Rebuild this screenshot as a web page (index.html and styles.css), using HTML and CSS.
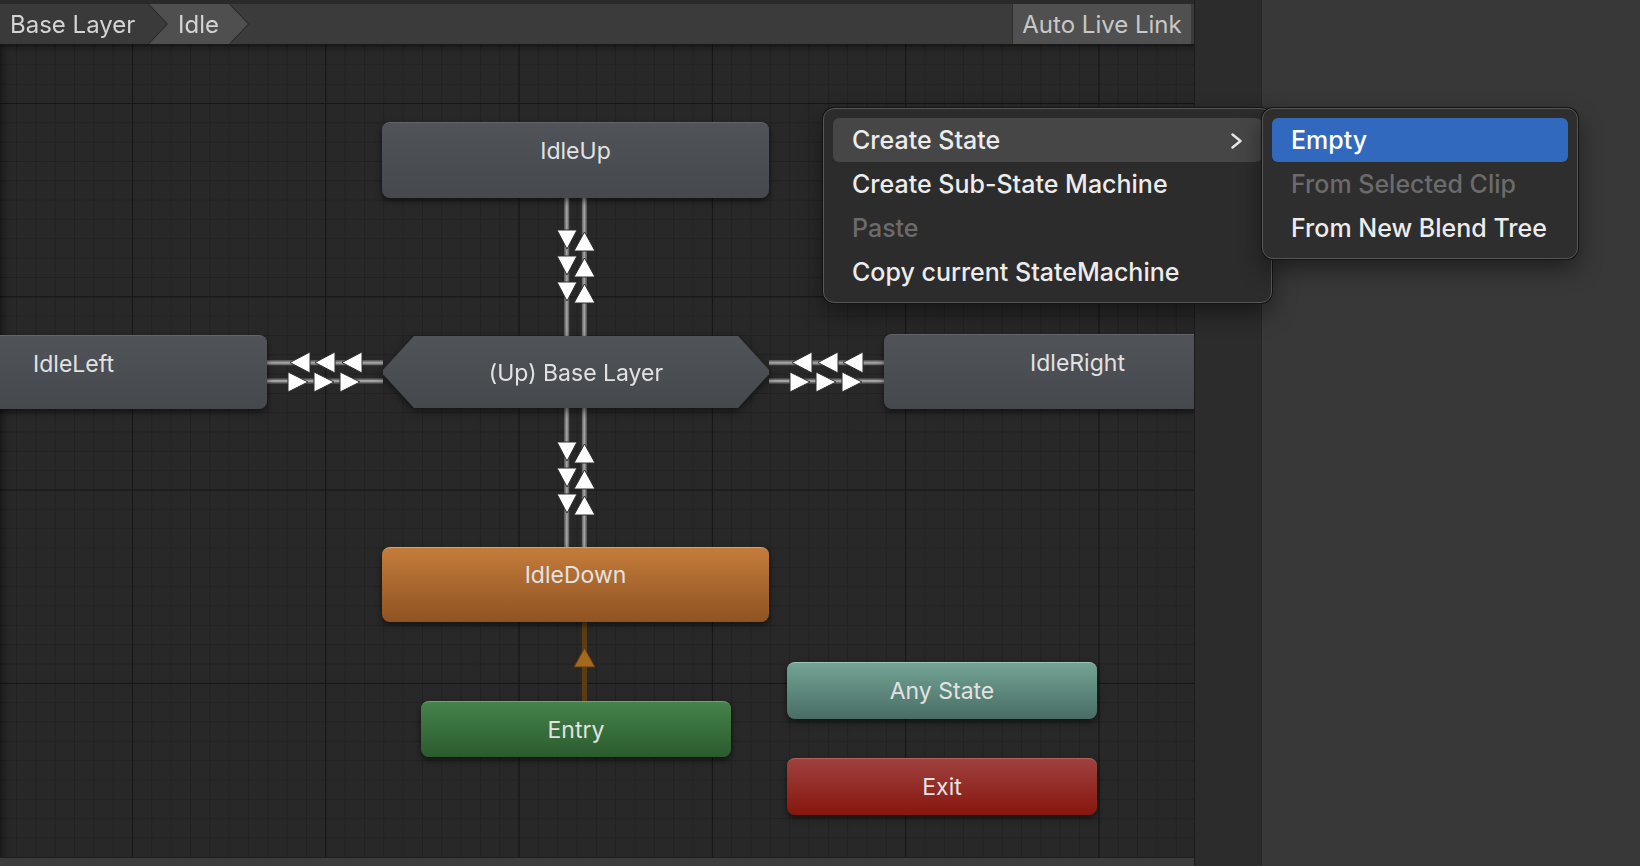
FILE: index.html
```html
<!DOCTYPE html>
<html>
<head>
<meta charset="utf-8">
<link rel="stylesheet" href="styles.css">
</head>
<body>
<div class="app">
  <div class="editor">
    <div class="header">
      <div class="toolbar">
        <div class="crumb-wrap crumb-wrap-base"><div class="crumb crumb-base">Base Layer</div></div>
        <div class="crumb-wrap crumb-wrap-idle"><div class="crumb crumb-idle">Idle</div></div>
        <div class="live-link">Auto Live Link</div>
      </div>
    </div>
    <div class="canvas">
      <svg class="wires" width="1194" height="813" viewBox="0 0 1194 813">
        <g class="wire">
          <line x1="566.7" y1="154" x2="566.7" y2="292"/>
          <line x1="584.3" y1="154" x2="584.3" y2="292"/>
          <line x1="566.7" y1="364" x2="566.7" y2="503"/>
          <line x1="584.3" y1="364" x2="584.3" y2="503"/>
          <line x1="267" y1="318.7" x2="383" y2="318.7"/>
          <line x1="267" y1="337" x2="383" y2="337"/>
          <line x1="769" y1="318.7" x2="884" y2="318.7"/>
          <line x1="769" y1="337" x2="884" y2="337"/>
        </g>
        <g class="wire-core">
          <line x1="566.7" y1="154" x2="566.7" y2="292"/>
          <line x1="584.3" y1="154" x2="584.3" y2="292"/>
          <line x1="566.7" y1="364" x2="566.7" y2="503"/>
          <line x1="584.3" y1="364" x2="584.3" y2="503"/>
          <line x1="267" y1="318.7" x2="383" y2="318.7"/>
          <line x1="267" y1="337" x2="383" y2="337"/>
          <line x1="769" y1="318.7" x2="884" y2="318.7"/>
          <line x1="769" y1="337" x2="884" y2="337"/>
        </g>
        <g class="arrow">
          <polygon points="557,186 577,186 567,205"/>
          <polygon points="557,212 577,212 567,231"/>
          <polygon points="557,238 577,238 567,257"/>
          <polygon points="574,207 595,207 584.5,188"/>
          <polygon points="574,233 595,233 584.5,214"/>
          <polygon points="574,259 595,259 584.5,240"/>

          <polygon points="557,398 577,398 567,417"/>
          <polygon points="557,424 577,424 567,443"/>
          <polygon points="557,450 577,450 567,469"/>
          <polygon points="574,419 595,419 584.5,400"/>
          <polygon points="574,445 595,445 584.5,426"/>
          <polygon points="574,471 595,471 584.5,452"/>

          <polygon points="290,318.5 310,308 310,329"/>
          <polygon points="315,318.5 335,308 335,329"/>
          <polygon points="342,318.5 362,308 362,329"/>
          <polygon points="288,328 288,348 308,338"/>
          <polygon points="314,328 314,348 334,338"/>
          <polygon points="340,328 340,348 360,338"/>

          <polygon points="792,318.5 812,308 812,329"/>
          <polygon points="818,318.5 838,308 838,329"/>
          <polygon points="843,318.5 863,308 863,329"/>
          <polygon points="790,328 790,348 810,338"/>
          <polygon points="816,328 816,348 836,338"/>
          <polygon points="842,328 842,348 862,338"/>
        </g>
        <line class="wire-entry" x1="584.5" y1="578" x2="584.5" y2="657"/>
        <polygon class="arrow-entry" points="574,623 595,623 584.5,604"/>
      </svg>

      <div class="node node-gray node-up">IdleUp</div>
      <div class="node node-gray node-left">IdleLeft</div>
      <div class="node node-gray node-right">IdleRight</div>
      <div class="hex-wrap"><div class="hex">(Up) Base Layer</div></div>
      <div class="node node-orange node-down">IdleDown</div>
      <div class="node node-small node-entry">Entry</div>
      <div class="node node-small node-any">Any State</div>
      <div class="node node-small node-exit">Exit</div>
    </div>
    <div class="bottombar"></div>
  </div>
  <div class="gutter"></div>
  <div class="panel"></div>

  <div class="menu menu-main">
    <div class="item item-active">
      <span>Create State</span>
      <svg class="chev" width="13" height="16" viewBox="0 0 13 16"><polyline points="2.5,1.5 10.5,8 2.5,14.5"/></svg>
    </div>
    <div class="item">Create Sub-State Machine</div>
    <div class="item item-disabled">Paste</div>
    <div class="item">Copy current StateMachine</div>
  </div>
  <div class="menu menu-sub">
    <div class="item item-selected">Empty</div>
    <div class="item item-disabled">From Selected Clip</div>
    <div class="item">From New Blend Tree</div>
  </div>
</div>
</body>
</html>
```
FILE: styles.css
```css
* { box-sizing: border-box; }
html, body { margin: 0; padding: 0; }
body {
  width: 1640px;
  height: 866px;
  overflow: hidden;
  background: #383838;
  font-family: Inter, "Noto Sans", sans-serif;
}
.app {
  position: relative;
  display: flex;
  width: 1640px;
  height: 866px;
}
.editor {
  width: 1195px;
  display: flex;
  flex-direction: column;
  border-right: 1px solid #1c1c1c;
}
.header {
  padding-top: 4px;
  background: #2a2a2a;
}
.toolbar {
  height: 40px;
  display: flex;
  align-items: stretch;
  background: #3b3b3b;
  color: #d4d4d4;
  font-size: 24px;
}
.crumb-wrap {
  filter: drop-shadow(1.5px 0 0 #242424);
  display: flex;
}
.crumb-wrap-base { position: relative; z-index: 2; }
.crumb-wrap-idle { position: relative; z-index: 1; margin-left: -19px; }
.crumb {
  display: flex;
  align-items: center;
  height: 40px;
}
.crumb-base {
  width: 167px;
  padding-left: 10px;
  background: #3a3a3a;
  clip-path: polygon(0 0, 148px 0, 167px 50%, 148px 100%, 0 100%);
}
.crumb-idle {
  width: 100px;
  padding-left: 30px;
  background: #4f4f4f;
  clip-path: polygon(0 0, 81px 0, 100px 50%, 81px 100%, 0 100%);
}
.live-link {
  margin-left: auto;
  margin-right: 3px;
  width: 179px;
  display: flex;
  align-items: center;
  justify-content: center;
  background: #505050;
  color: #c8c8c8;
  border-left: 1px solid #2e2e2e;
}
.canvas {
  position: relative;
  flex: 1;
  overflow: hidden;
  background-color: #282828;
  background-image:
    linear-gradient(to right, #161616 1px, transparent 1px),
    linear-gradient(to bottom, #161616 1px, transparent 1px),
    linear-gradient(to right, #212121 1px, transparent 1px),
    linear-gradient(to bottom, #212121 1px, transparent 1px);
  background-size: 193.3px 193.3px, 193.3px 193.3px, 19.33px 19.33px, 19.33px 19.33px;
  background-position: 132px 59px, 132px 59px, 132px 59px, 132px 59px;
  box-shadow: inset 6px 6px 8px -4px rgba(0,0,0,0.55);
}
.wires {
  position: absolute;
  left: 0;
  top: 0;
}
.wire line { stroke: #6c6c6c; stroke-width: 5; }
.wire-core line { stroke: #a2a2a2; stroke-width: 2; }
.arrow polygon { fill: #ffffff; stroke: #2e2e2e; stroke-width: 1; }
.wire-entry { stroke: #5c3d12; stroke-width: 5; }
.arrow-entry { fill: #a4681f; stroke: #5c3d12; stroke-width: 1; }

.node {
  position: absolute;
  border-radius: 8px;
  font-size: 23px;
  color: #e2e2e2;
  text-align: center;
  box-shadow: 0 3px 6px rgba(0,0,0,0.55);
}
.node-gray {
  background: linear-gradient(#505358, #45484c);
  border-top: 1px solid #62656a;
  padding-top: 14px;
  line-height: 28px;
}
.node-orange {
  background: linear-gradient(#c47c3b, #8f5322);
  border-top: 1px solid #d8a06a;
  padding-top: 13px;
  line-height: 28px;
}
.node-up { left: 382px; top: 78px; width: 387px; height: 76px; }
.node-left { left: -120px; top: 291px; width: 387px; height: 74px; }
.node-right { left: 884px; top: 290px; width: 387px; height: 75px; }
.node-down { left: 382px; top: 503px; width: 387px; height: 75px; }

.hex-wrap {
  position: absolute;
  left: 383px;
  top: 292px;
  width: 386px;
  height: 72px;
  filter: drop-shadow(0 3px 4px rgba(0,0,0,0.55));
}
.hex {
  width: 100%;
  height: 100%;
  display: flex;
  align-items: center;
  justify-content: center;
  padding-top: 2px;
  font-size: 23px;
  color: #e2e2e2;
  background: linear-gradient(#505358, #45484c);
  clip-path: polygon(31px 0, calc(100% - 31px) 0, 100% 47%, 100% 53%, calc(100% - 31px) 100%, 31px 100%, 0 53%, 0 47%);
}

.node-small {
  width: 310px;
  line-height: 56px;
}
.node-entry {
  left: 421px; top: 657px; height: 56px;
  background: linear-gradient(#46834c, #2a5b2d);
  border-top: 1px solid #6fa274;
}
.node-any {
  left: 787px; top: 618px; height: 57px;
  background: linear-gradient(#72a394, #496d65);
  border-top: 1px solid #9cc4b7;
}
.node-exit {
  left: 787px; top: 714px; height: 57px;
  background: linear-gradient(#9e413e, #87160e);
  border-top: 1px solid #b8605c;
}

.bottombar {
  height: 9px;
  background: #3c3c3c;
  border-top: 1px solid #1f1f1f;
}
.gutter {
  width: 66px;
  background: #2c2c2c;
}
.panel {
  flex: 1;
  background: #383838;
  border-left: 1px solid #262626;
}

.menu {
  position: absolute;
  top: 108px;
  background: #2c2c2c;
  border: 1px solid #575757;
  border-radius: 11px;
  box-shadow: 0 0 0 1px #141414, 0 10px 24px rgba(0,0,0,0.45);
  padding: 9px;
  font-size: 25px;
  font-weight: 500;
  color: #ececec;
}
.menu-main { left: 823px; width: 449px; height: 195px; z-index: 5; }
.menu-sub { left: 1262px; width: 316px; height: 151px; z-index: 6; background: #2e2e2e; }
.item {
  height: 44px;
  display: flex;
  align-items: center;
  padding-left: 19px;
  border-radius: 6px;
  white-space: nowrap;
}
.item-active {
  background: #464646;
  position: relative;
}
.item-selected {
  background: #3169bf;
  color: #ffffff;
}
.item-disabled { color: #6b6b6b; }
.chev {
  position: absolute;
  left: 397px;
  top: 15px;
}
.chev polyline {
  fill: none;
  stroke: #e8e8e8;
  stroke-width: 2.4;
  stroke-linecap: round;
  stroke-linejoin: round;
}
```
